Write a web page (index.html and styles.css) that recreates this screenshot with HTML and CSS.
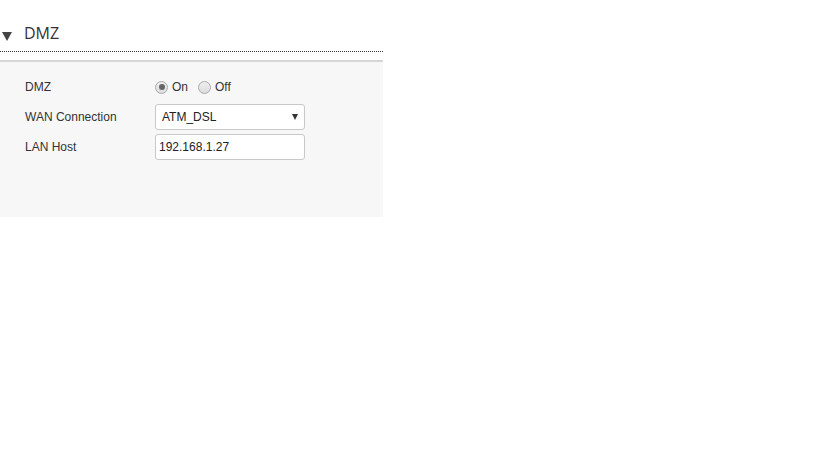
FILE: index.html
```html
<!DOCTYPE html>
<html>
<head>
<meta charset="utf-8">
<link rel="stylesheet" href="styles.css">
</head>
<body>
<div class="section">
  <div class="header">
    <span class="arrow"></span>
    <span class="title">DMZ</span>
  </div>
  <div class="panel">
    <div class="row">
      <div class="label">DMZ</div>
      <div class="field radios">
        <label class="radio"><span class="dot checked"></span>On</label>
        <label class="radio"><span class="dot"></span>Off</label>
      </div>
    </div>
    <div class="row">
      <div class="label">WAN Connection</div>
      <div class="field">
        <div class="select"><span>ATM_DSL</span><span class="caret"></span></div>
      </div>
    </div>
    <div class="row">
      <div class="label">LAN Host</div>
      <div class="field">
        <div class="input">192.168.1.27</div>
      </div>
    </div>
  </div>
</div>
</body>
</html>
```

FILE: styles.css
```css
html, body { margin: 0; padding: 0; background: #fff; }
body { font-family: "Liberation Sans", Arial, sans-serif; color: #333; }
.section { width: 383px; }
.header {
  height: 52px;
  display: flex;
  align-items: flex-end;
  border-bottom: 1px dotted #333;
  box-sizing: border-box;
  padding-bottom: 7px;
}
.arrow {
  width: 0; height: 0;
  border-left: 5px solid transparent;
  border-right: 5px solid transparent;
  border-top: 9px solid #444;
  margin-left: 2px;
  margin-bottom: 3px;
}
.title {
  margin-left: 12px;
  font-family: "Open Sans", sans-serif;
  font-size: 16px;
  color: #333;
  line-height: 22px;
}
.panel {
  margin-top: 8px;
  border-top: 2px solid #d6d6d6;
  background: #f7f7f7;
  height: 157px;
  padding: 14px 0 0 25px;
  box-sizing: border-box;
  font-size: 12px;
}
.row { display: flex; align-items: center; margin-bottom: 4px; }
.row:first-child { height: 22px; margin-bottom: 6px; }
.label { width: 130px; color: #333; }
.radios { display: flex; align-items: center; }
.radio { display: flex; align-items: center; margin-right: 10px; color: #333; }
.dot {
  width: 11px; height: 11px;
  border: 1px solid #aaa;
  border-radius: 50%;
  background: linear-gradient(#eee, #ddd);
  margin-right: 4px;
  position: relative;
  box-sizing: content-box;
}
.dot.checked::after {
  content: "";
  position: absolute;
  left: 2.5px; top: 2.5px;
  width: 6px; height: 6px;
  border-radius: 50%;
  background: #666;
}
.select, .input {
  width: 150px; height: 26px;
  box-sizing: border-box;
  border: 1px solid #c8c8c8;
  border-radius: 3px;
  background: #fff;
  display: flex;
  align-items: center;
  font-size: 12px;
  color: #222;
}
.select { padding: 0 6px; justify-content: space-between; }
.input { padding: 0 3px; }
.caret {
  width: 0; height: 0;
  border-left: 3px solid transparent;
  border-right: 3px solid transparent;
  border-top: 6px solid #333;
}
```
